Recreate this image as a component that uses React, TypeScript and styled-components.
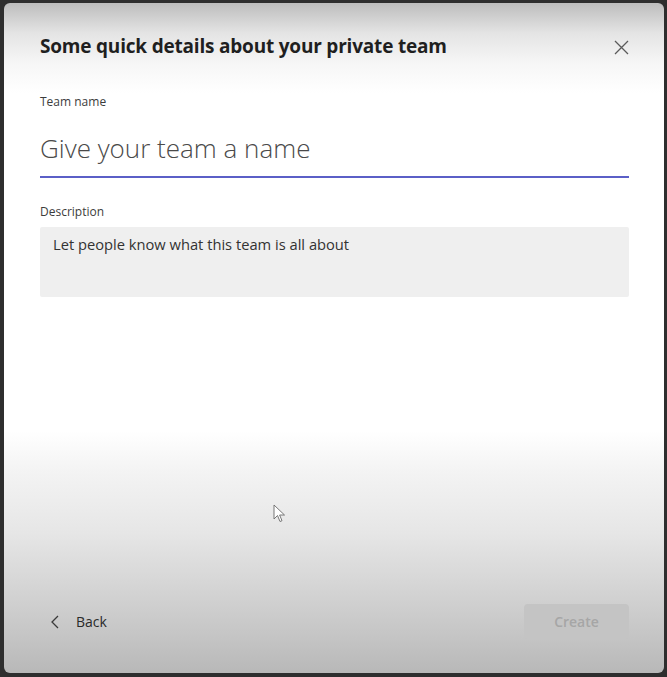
import React from 'react';
import styled, { createGlobalStyle } from 'styled-components';

const GlobalStyle = createGlobalStyle`
  html, body {
    margin: 0;
    padding: 0;
    background: #2e2e2e;
    font-family: "Open Sans", "Noto Sans", sans-serif;
  }
`;

const Page = styled.div`
  width: 667px;
  height: 677px;
  padding: 3px 3px 4px 4px;
  box-sizing: border-box;
`;

const Dialog = styled.div`
  position: relative;
  width: 660px;
  height: 670px;
  border-radius: 6px;
  box-sizing: border-box;
  padding: 29px 35px 34px 36px;
  display: flex;
  flex-direction: column;
  background: linear-gradient(
    to bottom,
    #bdbdbd 0px,
    #e4e4e4 30px,
    #f6f6f6 60px,
    #ffffff 90px,
    #ffffff 428px,
    #f3f3f3 470px,
    #e6e6e6 530px,
    #d6d6d6 580px,
    #c6c6c6 630px,
    #b8b8b8 670px
  );
`;

const Header = styled.div`
  display: flex;
  align-items: center;
  justify-content: space-between;
  height: 28px;
`;

const Title = styled.h1`
  margin: 0;
  font-size: 19px;
  font-weight: 700;
  line-height: 28px;
  color: #1f1f1f;
  letter-spacing: -0.2px;
`;

const CloseButton = styled.button`
  border: none;
  background: transparent;
  padding: 0;
  width: 16px;
  height: 16px;
  margin-top: 3px;
  display: flex;
  align-items: center;
  justify-content: center;
  cursor: pointer;
`;

const Label = styled.label<{ $top: number }>`
  display: block;
  margin-top: ${(p) => p.$top}px;
  font-size: 12px;
  line-height: 18px;
  color: #3c3c3c;
`;

const NameField = styled.div`
  margin-top: 19px;
  height: 46px;
  border-bottom: 2px solid #5b5fc7;
  display: flex;
  align-items: flex-start;
`;

const NameText = styled.span`
  font-size: 26px;
  font-weight: 300;
  line-height: 36px;
  color: #4a4a4a;
`;

const DescriptionBox = styled.div`
  margin-top: 6px;
  height: 70px;
  background: #efefef;
  border-radius: 2px;
  padding: 7px 13px;
  box-sizing: border-box;
  font-size: 14.7px;
  line-height: 20px;
  color: #333;
`;

const Footer = styled.div`
  margin-top: auto;
  display: flex;
  align-items: center;
  justify-content: space-between;
`;

const BackButton = styled.button`
  border: none;
  background: transparent;
  padding: 0 0 0 11px;
  display: flex;
  align-items: center;
  gap: 17px;
  font-family: inherit;
  font-size: 14px;
  color: #2a2a2a;
  cursor: pointer;
`;

const CreateButton = styled.button`
  width: 105px;
  height: 35px;
  border: none;
  border-radius: 4px;
  background: #c4c4c4;
  color: #a6a6a6;
  font-family: inherit;
  font-size: 14px;
  font-weight: 600;
`;

const Cursor = styled.svg`
  position: absolute;
  left: 269px;
  top: 501px;
`;

export default function App() {
  return (
    <>
      <GlobalStyle />
      <Page>
        <Dialog>
          <Header>
            <Title>Some quick details about your private team</Title>
            <CloseButton aria-label="Close">
              <svg width="15" height="15" viewBox="0 0 15 15">
                <path d="M1 1 L14 14 M14 1 L1 14" stroke="#5a5a5a" strokeWidth="1.3" fill="none" />
              </svg>
            </CloseButton>
          </Header>

          <Label $top={33}>Team name</Label>
          <NameField>
            <NameText>Give your team a name</NameText>
          </NameField>

          <Label $top={25}>Description</Label>
          <DescriptionBox>Let people know what this team is all about</DescriptionBox>

          <Footer>
            <BackButton>
              <svg width="8" height="14" viewBox="0 0 8 14">
                <path d="M7 1 L1 7 L7 13" stroke="#3a3a3a" strokeWidth="1.3" fill="none" />
              </svg>
              Back
            </BackButton>
            <CreateButton disabled>Create</CreateButton>
          </Footer>

          <Cursor width="13" height="20" viewBox="0 0 13 20">
            <path
              d="M1 1 L1 15 L4.5 11.5 L7 17.5 L9 16.7 L6.6 11 L11.5 11 Z"
              fill="#fff"
              stroke="#6a6a6a"
              strokeWidth="0.9"
              strokeLinejoin="round"
            />
          </Cursor>
        </Dialog>
      </Page>
    </>
  );
}
